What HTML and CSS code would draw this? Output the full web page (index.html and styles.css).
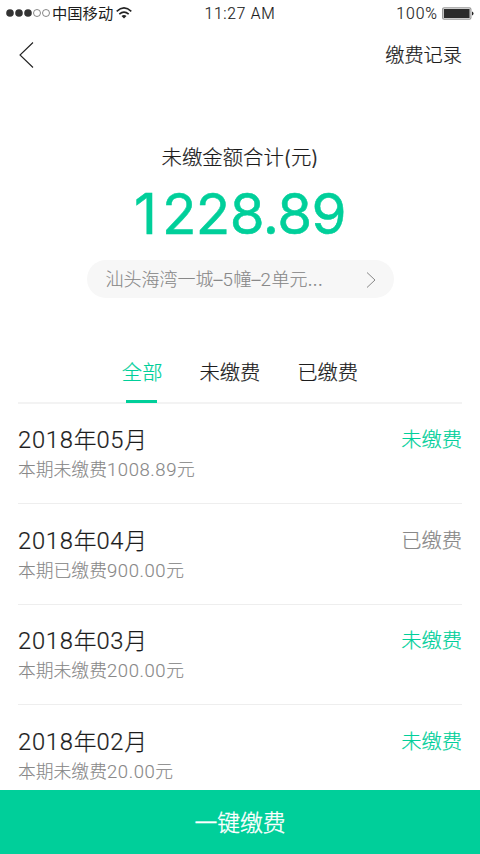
FILE: index.html
```html
<!DOCTYPE html>
<html lang="zh-CN">
<head>
<meta charset="utf-8">
<title>缴费</title>
<link rel="stylesheet" href="styles.css">
</head>
<body>
<div class="screen">
  <div class="status">
    <div class="carrier">
      <svg class="dots" width="44" height="10" viewBox="0 0 44 10"><g fill="#333"><circle cx="4" cy="5" r="3.8"/><circle cx="13" cy="5" r="3.8"/><circle cx="22" cy="5" r="3.8"/></g><g fill="none" stroke="#555" stroke-width=".7"><circle cx="31" cy="5" r="3.5"/><circle cx="40" cy="5" r="3.5"/></g></svg>
      <span class="operator">中国移动</span>
      <svg class="wifi" width="16" height="12" viewBox="0 0 16 12"><g fill="none" stroke="#222" stroke-width="1.6"><path d="M.7 4.3Q8-2.4 15.3 4.3"/><path d="M3.3 7.1Q8 3 12.7 7.1"/></g><path d="M5.5 9Q8 7 10.5 9L8 11.5Z" fill="#222"/></svg>
    </div>
    <span class="time">11:27 AM</span>
    <div class="power"><span>100%</span>
      <svg width="32" height="13" viewBox="0 0 32 13"><rect x=".6" y=".8" width="28.3" height="11.4" rx="1.5" fill="#fff" stroke="#999" stroke-width="1.2"/><rect x="1.8" y="2" width="25.8" height="9" fill="#2c2c2c"/><path d="M30 4.5Q31.5 5 31.5 6.5T30 8.5Z" fill="#222"/></svg>
    </div>
  </div>
  <header class="nav">
    <svg width="15" height="26" viewBox="0 0 15 26"><path d="M14 .5 1 13 14 25.5" fill="none" stroke="#222" stroke-width="1.1"/></svg>
    <a class="history">缴费记录</a>
  </header>
  <section class="summary">
    <div class="label">未缴金额合计(元)</div>
    <div class="amount"><span class="lead">1</span>228.89</div>
    <div class="address"><span>汕头海湾一城–<span class="num">5</span>幢–<span class="num">2</span>单元...</span>
      <svg width="10" height="16" viewBox="0 0 10 16"><path d="M1 .5 9 8 1 15.5" fill="none" stroke="#888" stroke-width="1"/></svg>
    </div>
  </section>
  <nav class="tabs"><a class="tab active">全部</a><a class="tab">未缴费</a><a class="tab">已缴费</a></nav>
  <main class="list">
    <article class="row"><div><h2><span class="num">2018</span>年<span class="num">05</span>月</h2><p>本期未缴费<span class="num">1008.89</span>元</p></div><span class="state">未缴费</span></article>
    <article class="row"><div><h2><span class="num">2018</span>年<span class="num">04</span>月</h2><p>本期已缴费<span class="num">900.00</span>元</p></div><span class="state paid">已缴费</span></article>
    <article class="row"><div><h2><span class="num">2018</span>年<span class="num">03</span>月</h2><p>本期未缴费<span class="num">200.00</span>元</p></div><span class="state">未缴费</span></article>
    <article class="row"><div><h2><span class="num">2018</span>年<span class="num">02</span>月</h2><p>本期未缴费<span class="num">20.00</span>元</p></div><span class="state">未缴费</span></article>
  </main>
  <footer class="pay">一键缴费</footer>
</div>
</body>
</html>
```
FILE: styles.css
```css
* { box-sizing: border-box; }
body { margin: 0; background: #fff; color: #1c1c1c; font-family: Inter, "Noto Sans CJK SC", sans-serif; font-weight: 300; -webkit-text-stroke: .2px; }
svg { display: block; flex: none; }
h2, p { margin: 0; font-weight: 300; }
.num { font-family: Roboto, sans-serif; font-size: 1.04em; letter-spacing: .032em; }
.screen { height: 854px; display: flex; flex-direction: column; overflow: hidden; white-space: nowrap; }
.status { height: 27px; flex: none; display: grid; grid-template-columns: 1fr auto 1fr; align-items: center; padding: 0 6px 0 6px; line-height: 26px; font-family: Roboto, "Noto Sans CJK SC", sans-serif; -webkit-text-stroke: 0; }
.carrier { display: flex; align-items: center; }
.dots { margin-top: -1px; }
.operator { margin-left: 2px; font-size: 15.3px; line-height: 22px; margin-top: -3px; font-family: "Noto Sans CJK SC", sans-serif; font-weight: 400; }
.wifi { margin: -1px 0 0 3px; }
.time { font-size: 15.6px; letter-spacing: .75px; -webkit-text-stroke: .15px; }
.power { display: flex; justify-content: flex-end; align-items: center; gap: 4px; font-size: 15.8px; letter-spacing: .95px; -webkit-text-stroke: .15px; }
.nav { height: 55px; flex: none; display: flex; justify-content: space-between; align-items: center; padding: 0 18px 0 19px; }
.history { font-size: 19.2px; line-height: 28px; }
.summary { height: 266px; flex: none; padding-top: 61px; display: flex; flex-direction: column; align-items: center; }
.label { font-size: 20.4px; line-height: 30px; }
.amount { color: #00cf9a; font-size: 56.5px; font-weight: 400; line-height: 70px; letter-spacing: -.6px; margin-top: 6px; -webkit-text-stroke: .5px; }
.lead { letter-spacing: 5px; }
.address { width: 307px; height: 38px; margin: 11px 0 0 0; border-radius: 19px; background: #f7f7f7; color: #888; font-size: 18px; line-height: 28px; padding: 1px 18px 0 19px; display: flex; align-items: center; justify-content: space-between; -webkit-text-stroke: .1px; }
.tabs { height: 56px; flex: none; margin: 0 18px; border-bottom: 2px solid #f3f3f3; display: flex; justify-content: center; gap: 37px; font-size: 20.3px; line-height: 49px; }
.tab { position: relative; }
.active { color: #00cf9a; }
.active::after { content: ""; position: absolute; left: 4px; bottom: -1px; width: 31px; height: 3px; background: #00cf9a; }
.list { flex: 1; min-height: 0; overflow: hidden; margin: 0 18px; }
.row { height: 100.5px; border-bottom: 1px solid #eee; display: flex; justify-content: space-between; padding-top: 18.4px; }
.row:first-child { height: 100.2px; }
.row h2 { font-size: 22.8px; line-height: 36px; }
.row p { color: #888; font-size: 17.8px; line-height: 24px; -webkit-text-stroke: .1px; }
.state { color: #00cf9a; font-size: 20.3px; line-height: 36px; }
.paid { color: #888; }
.pay { height: 64px; flex: none; background: #00cf9a; color: #fff; font-size: 22.8px; line-height: 65px; text-align: center; -webkit-text-stroke: .35px; }
```
